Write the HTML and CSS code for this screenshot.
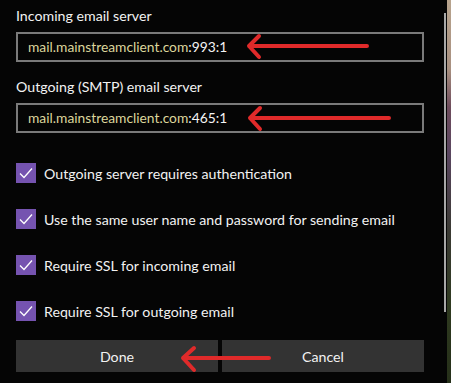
FILE: index.html
```html
<!DOCTYPE html>
<html lang="en">
<head>
    <meta charset="UTF-8">
    <meta name="viewport" content="width=device-width, initial-scale=1.0">
    <title>Account settings</title>
    <link rel="stylesheet" href="styles.css">
</head>
<body>
    <div class="screen">
        <div class="dialog">
            <form class="settings">
                <label class="field-label" for="incoming">Incoming email server</label>
                <div class="field" id="incoming"><span class="host">mail.mainstreamclient.com</span>:993:1</div>

                <label class="field-label second" for="outgoing">Outgoing (SMTP) email server</label>
                <div class="field" id="outgoing"><span class="host">mail.mainstreamclient.com</span>:465:1</div>

                <div class="checks">
                    <div class="check-row"><span class="box"><svg viewBox="0 0 20 20" width="20" height="20"><path d="M4 10.5 L8 14.5 L16 5.5" fill="none" stroke="#fff" stroke-width="1.3"/></svg></span>Outgoing server requires authentication</div>
                    <div class="check-row"><span class="box"><svg viewBox="0 0 20 20" width="20" height="20"><path d="M4 10.5 L8 14.5 L16 5.5" fill="none" stroke="#fff" stroke-width="1.3"/></svg></span>Use the same user name and password for sending email</div>
                    <div class="check-row"><span class="box"><svg viewBox="0 0 20 20" width="20" height="20"><path d="M4 10.5 L8 14.5 L16 5.5" fill="none" stroke="#fff" stroke-width="1.3"/></svg></span>Require SSL for incoming email</div>
                    <div class="check-row"><span class="box"><svg viewBox="0 0 20 20" width="20" height="20"><path d="M4 10.5 L8 14.5 L16 5.5" fill="none" stroke="#fff" stroke-width="1.3"/></svg></span>Require SSL for outgoing email</div>
                </div>

                <div class="buttons">
                    <button type="button">Done</button>
                    <button type="button">Cancel</button>
                </div>
            </form>
            <div class="scrollbar"></div>
        </div>
        <div class="backdrop"></div>

        <!-- red annotation arrows drawn on top of the screenshot -->
        <svg class="marks" width="451" height="383" viewBox="0 0 451 383">
            <g fill="none" stroke="#e02a2a" stroke-width="4" stroke-linecap="round" stroke-linejoin="round">
                <path d="M249 46 H367 M259 36 L249 46 L259 57"/>
                <path d="M250 118 H389 M260 108 L250 118 L260 129"/>
                <path d="M183 358 H269 M194 348 L183 358 L194 370"/>
            </g>
        </svg>
    </div>
</body>
</html>
```

FILE: styles.css
```css
body {
    margin: 0;
    background: #000;
    font-family: Lato, "Open Sans", sans-serif;
    color: #f2f2f2;
}
.screen {
    position: relative;
    width: 451px;
    height: 383px;
    display: flex;
    overflow: hidden;
}
.dialog {
    width: 447px;
    background: #050505;
    display: flex;
}
.settings {
    width: 408px;
    padding-left: 16px;
    display: flex;
    flex-direction: column;
}
.field-label {
    margin-top: 6px;
    line-height: 20px;
    font-size: 14.2px;
}
.field-label.second {
    margin-top: 15px;
}
.field {
    margin-top: 6px;
    height: 30px;
    box-sizing: border-box;
    border: 2px solid #7a7a7a;
    padding-left: 10px;
    line-height: 26px;
    font-size: 13.8px;
    color: #f4f4f4;
}
.host {
    color: #dcd69c;
}
.checks {
    margin-top: 30px;
    display: flex;
    flex-direction: column;
    gap: 26px;
}
.check-row {
    display: flex;
    align-items: center;
    height: 20px;
    font-size: 14.2px;
}
.box {
    width: 20px;
    height: 20px;
    background: #7553b0;
    margin-right: 8px;
    display: flex;
}
.buttons {
    margin-top: 19px;
    display: flex;
    gap: 4px;
}
.buttons button {
    flex: 1;
    height: 32px;
    background: #333;
    color: #f2f2f2;
    border: none;
    font-family: inherit;
    font-size: 14.2px;
}
.scrollbar {
    margin: 13px 0 0 20px;
    width: 2px;
    height: 299px;
    background: #a8a8a8;
}
.backdrop {
    width: 4px;
    background: linear-gradient(#b8a48e 0%, #a89080 18%, #6e4c5c 28%, #5a4660 40%, #3b3a34 60%, #2f3a20 80%, #26301a 100%);
}
.marks {
    position: absolute;
    left: 0;
    top: 0;
    pointer-events: none;
}
```
